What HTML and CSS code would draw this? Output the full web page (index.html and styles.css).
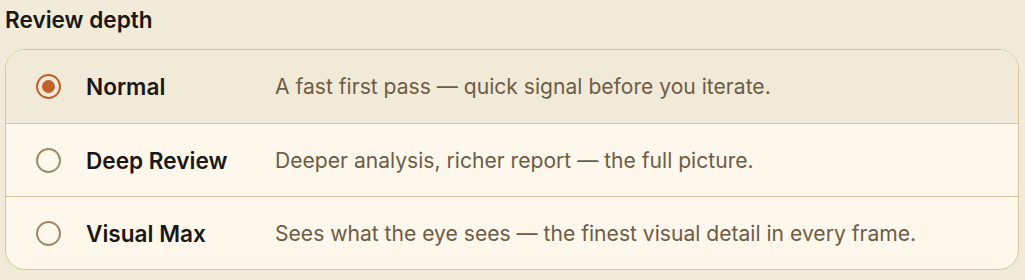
FILE: index.html
```html
<!DOCTYPE html>
<html lang="en">

<head>
    <meta charset="UTF-8">
    <title>Review depth</title>
    <link rel="stylesheet" href="styles.css">
</head>

<body>
    <div class="depth-picker">
        <h2 class="title">Review depth</h2>
        <div class="options">
            <label class="option selected">
                <span class="radio"></span>
                <span class="name">Normal</span>
                <span class="desc">A fast first pass — quick signal before you iterate.</span>
            </label>
            <label class="option">
                <span class="radio"></span>
                <span class="name">Deep Review</span>
                <span class="desc">Deeper analysis, richer report — the full picture.</span>
            </label>
            <label class="option">
                <span class="radio"></span>
                <span class="name">Visual Max</span>
                <span class="desc">Sees what the eye sees — the finest visual detail in every frame.</span>
            </label>
        </div>
    </div>
</body>

</html>
```

FILE: styles.css
```css
* {
    margin: 0;
    padding: 0;
    box-sizing: border-box;
}

body {
    background: #f2ebda;
    font-family: Inter, "Noto Sans", sans-serif;
    color: #1c1712;
}

.depth-picker {
    padding: 7px 6px 0 5px;
}

.title {
    font-size: 22.6px;
    font-weight: 600;
    line-height: 26px;
    margin-bottom: 16px;
}

.options {
    border: 1.5px solid #d9c59b;
    border-radius: 20px;
    overflow: hidden;
    background: #fdf7ec;
}

.option {
    display: flex;
    align-items: center;
    height: 73px;
    padding-left: 30px;
    border-top: 1.5px solid #d9c59b;
}

.option:first-child {
    border-top: none;
}

.option.selected {
    background: #f2ead8;
}

.radio {
    width: 25px;
    height: 25px;
    border: 2.5px solid #9f8a68;
    border-radius: 50%;
    display: flex;
    align-items: center;
    justify-content: center;
    flex-shrink: 0;
}

.selected .radio {
    border-color: #c0602a;
}

.selected .radio::after {
    content: "";
    width: 13px;
    height: 13px;
    border-radius: 50%;
    background: #c0602a;
}

.name {
    width: 189px;
    margin-left: 25px;
    font-size: 22.6px;
    font-weight: 600;
}

.desc {
    font-size: 21.1px;
    color: #6e5c45;
}
```
